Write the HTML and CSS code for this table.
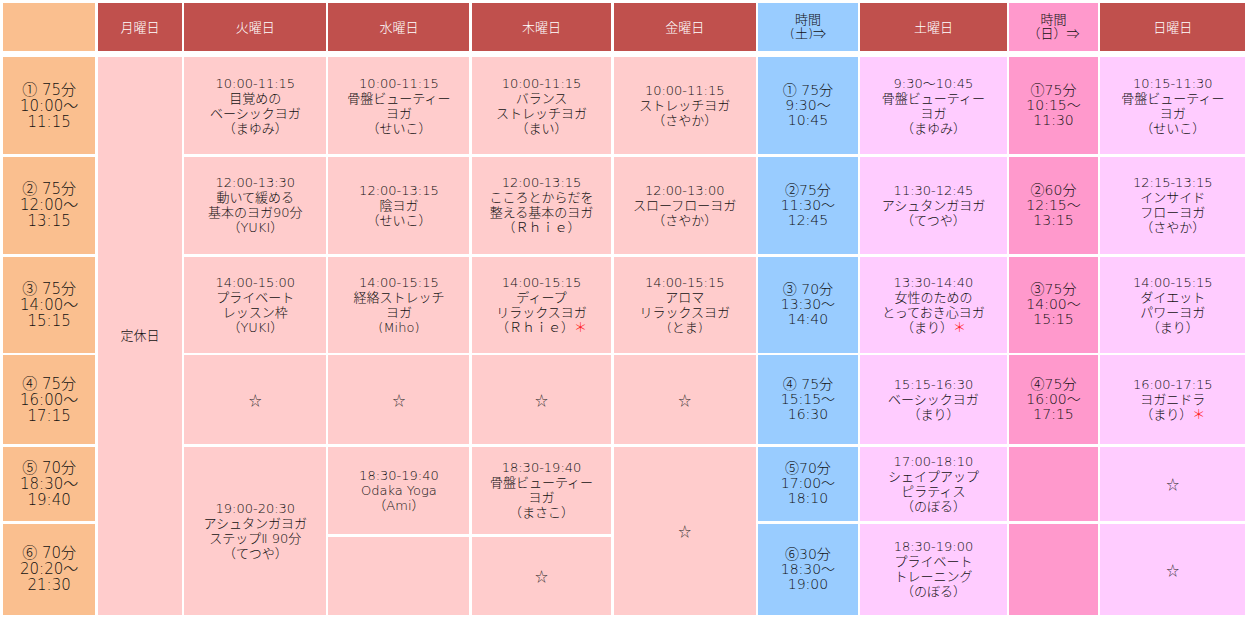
FILE: index.html
```html
<!DOCTYPE html>
<html lang="ja">
<head>
<meta charset="utf-8">
<title>スケジュール</title>
<link rel="stylesheet" href="styles.css">
</head>
<body>
<div class="page">
  <div class="grid head">
    <div class="cell t"></div>
    <div class="cell h"><p>月曜日</p></div>
    <div class="cell h"><p>火曜日</p></div>
    <div class="cell h"><p>水曜日</p></div>
    <div class="cell h"><p>木曜日</p></div>
    <div class="cell h"><p>金曜日</p></div>
    <div class="cell ts hs"><p>時間<br>(土)⇒</p></div>
    <div class="cell h"><p>土曜日</p></div>
    <div class="cell tn hs"><p>時間<br>（日）⇒</p></div>
    <div class="cell h"><p>日曜日</p></div>
  </div>
  <div class="grid body">
    <!-- row 1 -->
    <div class="cell t"><p>① 75分<br>10:00～<br>11:15</p></div>
    <div class="cell w r7"><p>定休日</p></div>
    <div class="cell w"><p>10:00-11:15<br>目覚めの<br>ベーシックヨガ<br>（まゆみ）</p></div>
    <div class="cell w"><p>10:00-11:15<br>骨盤ビューティー<br>ヨガ<br>（せいこ）</p></div>
    <div class="cell w"><p>10:00-11:15<br>バランス<br>ストレッチヨガ<br>（まい）</p></div>
    <div class="cell w"><p>10:00-11:15<br>ストレッチヨガ<br>（さやか）</p></div>
    <div class="cell ts"><p>① 75分<br>9:30～<br>10:45</p></div>
    <div class="cell s"><p>9:30～10:45<br>骨盤ビューティー<br>ヨガ<br>（まゆみ）</p></div>
    <div class="cell tn"><p>①75分<br>10:15～<br>11:30</p></div>
    <div class="cell s"><p>10:15-11:30<br>骨盤ビューティー<br>ヨガ<br>（せいこ）</p></div>
    <!-- row 2 -->
    <div class="cell t"><p>② 75分<br>12:00～<br>13:15</p></div>
    <div class="cell w"><p>12:00-13:30<br>動いて緩める<br>基本のヨガ90分<br>（YUKI）</p></div>
    <div class="cell w"><p>12:00-13:15<br>陰ヨガ<br>（せいこ）</p></div>
    <div class="cell w"><p>12:00-13:15<br>こころとからだを<br>整える基本のヨガ<br>（Ｒｈｉｅ）</p></div>
    <div class="cell w"><p>12:00-13:00<br>スローフローヨガ<br>（さやか）</p></div>
    <div class="cell ts"><p>②75分<br>11:30～<br>12:45</p></div>
    <div class="cell s"><p>11:30-12:45<br>アシュタンガヨガ<br>（てつや）</p></div>
    <div class="cell tn"><p>②60分<br>12:15～<br>13:15</p></div>
    <div class="cell s"><p>12:15-13:15<br>インサイド<br>フローヨガ<br>（さやか）</p></div>
    <!-- row 3 -->
    <div class="cell t"><p>③ 75分<br>14:00～<br>15:15</p></div>
    <div class="cell w"><p>14:00-15:00<br>プライベート<br>レッスン枠<br>（YUKI）</p></div>
    <div class="cell w"><p>14:00-15:15<br>経絡ストレッチ<br>ヨガ<br>(Miho)</p></div>
    <div class="cell w"><p>14:00-15:15<br>ディープ<br>リラックスヨガ<br>（Ｒｈｉｅ）<span class="mark">＊</span></p></div>
    <div class="cell w"><p>14:00-15:15<br>アロマ<br>リラックスヨガ<br>(とま)</p></div>
    <div class="cell ts"><p>③ 70分<br>13:30～<br>14:40</p></div>
    <div class="cell s"><p>13:30-14:40<br>女性のための<br>とっておき心ヨガ<br>（まり）<span class="mark">＊</span></p></div>
    <div class="cell tn"><p>③75分<br>14:00～<br>15:15</p></div>
    <div class="cell s"><p>14:00-15:15<br>ダイエット<br>パワーヨガ<br>（まり）</p></div>
    <!-- row 4 -->
    <div class="cell t"><p>④ 75分<br>16:00～<br>17:15</p></div>
    <div class="cell w"><p class="star">☆</p></div>
    <div class="cell w"><p class="star">☆</p></div>
    <div class="cell w"><p class="star">☆</p></div>
    <div class="cell w"><p class="star">☆</p></div>
    <div class="cell ts"><p>④ 75分<br>15:15～<br>16:30</p></div>
    <div class="cell s"><p>15:15-16:30<br>ベーシックヨガ<br>（まり）</p></div>
    <div class="cell tn"><p>④75分<br>16:00～<br>17:15</p></div>
    <div class="cell s"><p>16:00-17:15<br>ヨガニドラ<br>（まり）<span class="mark">＊</span></p></div>
    <!-- row 5 -->
    <div class="cell t"><p>⑤ 70分<br>18:30～<br>19:40</p></div>
    <div class="cell w r3"><p>19:00-20:30<br>アシュタンガヨガ<br>ステップⅡ 90分<br>（てつや）</p></div>
    <div class="cell w r2"><p>18:30-19:40<br>Odaka Yoga<br>（Ami）</p></div>
    <div class="cell w r2"><p>18:30-19:40<br>骨盤ビューティー<br>ヨガ<br>（まさこ）</p></div>
    <div class="cell w r3"><p class="star">☆</p></div>
    <div class="cell ts"><p>⑤70分<br>17:00～<br>18:10</p></div>
    <div class="cell s"><p>17:00-18:10<br>シェイプアップ<br>ピラティス<br>（のぼる）</p></div>
    <div class="cell tn"></div>
    <div class="cell s"><p class="star">☆</p></div>
    <!-- row 6 -->
    <div class="cell t r2"><p>⑥ 70分<br>20:20～<br>21:30</p></div>
    <div class="cell ts r2"><p>⑥30分<br>18:30～<br>19:00</p></div>
    <div class="cell s r2"><p>18:30-19:00<br>プライベート<br>トレーニング<br>（のぼる）</p></div>
    <div class="cell tn r2"></div>
    <div class="cell s r2"><p class="star">☆</p></div>
    <!-- row 7 -->
    <div class="cell w"></div>
    <div class="cell w"><p class="star">☆</p></div>
  </div>
</div>
</body>
</html>
```

FILE: styles.css
```css
html, body {
  margin: 0;
  padding: 0;
  background: #ffffff;
}

.page {
  padding: 3px 0 0 3px;
  font-family: "DejaVu Sans", "Noto Sans CJK JP", sans-serif;
  font-weight: 200;
  color: #111111;
}

.grid {
  display: grid;
  grid-template-columns: 92.3px 84.7px 141.7px 141px 139.7px 142.2px 99.8px 146.7px 89px 145px;
  column-gap: 2.25px;
  width: 1243px;
}

.head {
  grid-template-rows: 48px;
  margin-bottom: 6px;
}

.body {
  grid-template-rows: 97px 97.5px 96px 89px 74.5px 10.5px 78px;
  row-gap: 2.5px;
}

.cell {
  display: flex;
  align-items: center;
  justify-content: center;
  text-align: center;
  font-size: 13px;
  line-height: 15px;
  overflow: hidden;
}

.cell p {
  margin: 0;
}

.h {
  background: #c0504d;
  color: #ffffff;
}

.hs {
  line-height: 14px;
}

.t {
  background: #fabf8f;
  font-size: 15px;
  line-height: 16px;
}

.w {
  background: #ffcccc;
}

.ts {
  background: #99ccff;
  font-size: 14px;
}

.s {
  background: #ffccff;
}

.tn {
  background: #ff99cc;
  font-size: 14px;
}

.head .ts,
.head .tn {
  font-size: 13px;
}

.r2 { grid-row: span 2; }
.r3 { grid-row: span 3; }
.r7 { grid-row: span 7; }

.cell .star {
  font-family: "Noto Sans CJK JP", sans-serif;
  font-size: 13px;
  color: #222222;
}

.mark {
  color: #ff2020;
}
```
